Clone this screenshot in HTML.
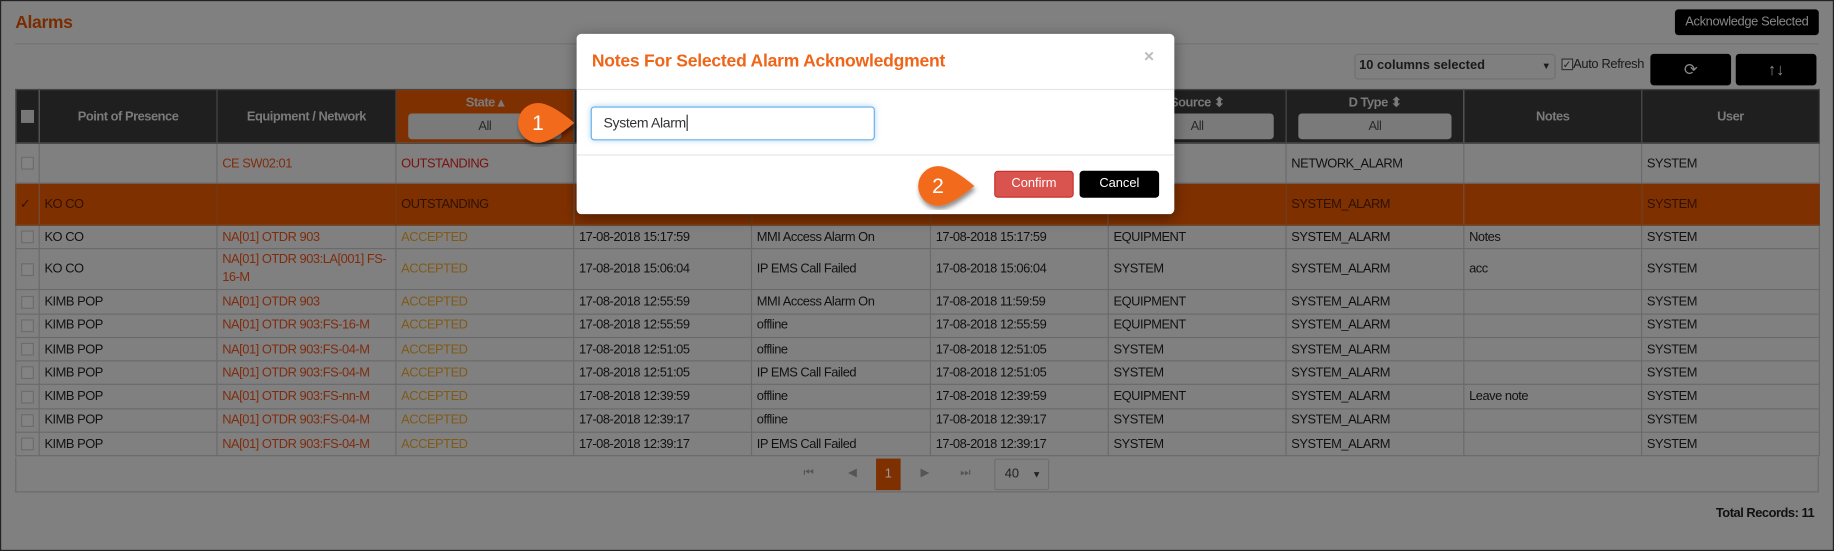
<!DOCTYPE html>
<html><head><meta charset="utf-8"><style>
*{box-sizing:border-box;margin:0;padding:0}
html,body{width:1834px;height:551px;overflow:hidden;background:#7f7f7f}
#w{position:absolute;left:0;top:0;width:1568px;height:471px;transform:scale(1.16964,1.16985);transform-origin:0 0;font-family:"Liberation Sans",sans-serif;font-size:11px;color:#111;background:#808080;border:1px solid #222}
.a{position:absolute}
table{position:absolute;left:12px;top:75px;border-collapse:collapse;width:1542px;table-layout:fixed}
td,th{border:1px solid #6a6a6a;padding:0 4px;white-space:nowrap;overflow:hidden;text-align:left;font-weight:normal;letter-spacing:-.4px}
th{background:#1f1f1f;color:#7a7a7a;font-weight:bold;text-align:center;height:46px;border-color:#444}
th.st{background:#7f3000}
.flt{display:block;margin:3px auto 0;width:92%;height:22px;border-radius:3px;background:#7a7a7a;color:#2a2a2a;font-weight:normal;line-height:22px}
td{height:20.3px}
.cb{width:11px;height:11px;border:1px solid #6c6c6c;background:#838383;display:inline-block;vertical-align:middle}
.lk{color:#7f2c0e}.ac{color:#7f5a18}.os{color:#7a1010}
tr.sel td{background:#7f3000;color:#2d1206;border-color:#6e3a18}
.btn{position:absolute;background:#000;border-radius:3px;color:#888;text-align:center}
</style></head><body><div id="w">
<div class="a" style="left:12px;top:10px;font-size:15px;font-weight:bold;color:#7a2c00;letter-spacing:-.3px">Alarms</div>
<div class="a" style="left:12px;top:36px;width:1542px;border-top:1px solid #737373"></div>
<div class="btn" style="left:1431px;top:7px;width:123px;height:22px;line-height:22px;font-size:11px;color:#888;letter-spacing:-.3px">Acknowledge Selected</div>
<div class="a" style="left:1157px;top:45px;width:172px;height:22px;border:1px solid #707070;border-radius:3px;background:#7f7f7f;color:#1a1a1a;font-weight:bold;padding:3px 3px;font-size:11px">10 columns selected<span style="float:right;font-size:8px;margin-top:2px">▼</span></div>
<div class="a" style="left:1334px;top:48px;font-size:11px;color:#1a1a1a;letter-spacing:-.3px"><span class="cb" style="width:10px;height:10px;font-size:9px;line-height:9px;background:#888;border-color:#333">✓</span>Auto Refresh</div>
<div class="btn" style="left:1410px;top:45px;width:69px;height:27px;line-height:27px;font-size:14px">⟳</div>
<div class="btn" style="left:1483px;top:45px;width:69px;height:27px;line-height:27px;font-size:14px">↑↓</div>
<table>
<colgroup><col style="width:20px"><col style="width:152px"><col style="width:153px"><col style="width:152px"><col style="width:152px"><col style="width:153px"><col style="width:152px"><col style="width:152px"><col style="width:152px"><col style="width:152px"><col style="width:152px"></colgroup>
<tr><th style="padding:0"><span class="cb" style="background:#777;border-color:#777"></span></th><th>Point of Presence</th><th>Equipment / Network</th><th class="st">State ▴<span class="flt">All</span></th><th>Raised Time<span class="flt">All</span></th><th>Description<span class="flt">All</span></th><th>Cleared<span class="flt">All</span></th><th>Source ⬍<span class="flt">All</span></th><th>D Type ⬍<span class="flt">All</span></th><th>Notes</th><th>User</th></tr>
<tr style="height:34px"><td><span class="cb"></span></td><td></td><td class="lk">CE SW02:01</td><td class="os">OUTSTANDING</td><td></td><td></td><td></td><td></td><td>NETWORK_ALARM</td><td></td><td>SYSTEM</td></tr>
<tr class="sel" style="height:36px"><td style="padding:0 3px">✓</td><td>KO CO</td><td></td><td>OUTSTANDING</td><td></td><td></td><td></td><td></td><td>SYSTEM_ALARM</td><td></td><td>SYSTEM</td></tr>
<tr><td><span class="cb"></span></td><td>KO CO</td><td class="lk">NA[01] OTDR 903</td><td class="ac">ACCEPTED</td><td>17-08-2018 15:17:59</td><td>MMI Access Alarm On</td><td>17-08-2018 15:17:59</td><td>EQUIPMENT</td><td>SYSTEM_ALARM</td><td>Notes</td><td>SYSTEM</td></tr>
<tr style="height:35px"><td><span class="cb"></span></td><td>KO CO</td><td class="lk" style="white-space:normal;line-height:15px">NA[01] OTDR 903:LA[001] FS-16-M</td><td class="ac">ACCEPTED</td><td>17-08-2018 15:06:04</td><td>IP EMS Call Failed</td><td>17-08-2018 15:06:04</td><td>SYSTEM</td><td>SYSTEM_ALARM</td><td>acc</td><td>SYSTEM</td></tr>
<tr><td><span class="cb"></span></td><td>KIMB POP</td><td class="lk">NA[01] OTDR 903</td><td class="ac">ACCEPTED</td><td>17-08-2018 12:55:59</td><td>MMI Access Alarm On</td><td>17-08-2018 11:59:59</td><td>EQUIPMENT</td><td>SYSTEM_ALARM</td><td></td><td>SYSTEM</td></tr>
<tr><td><span class="cb"></span></td><td>KIMB POP</td><td class="lk">NA[01] OTDR 903:FS-16-M</td><td class="ac">ACCEPTED</td><td>17-08-2018 12:55:59</td><td>offline</td><td>17-08-2018 12:55:59</td><td>EQUIPMENT</td><td>SYSTEM_ALARM</td><td></td><td>SYSTEM</td></tr>
<tr><td><span class="cb"></span></td><td>KIMB POP</td><td class="lk">NA[01] OTDR 903:FS-04-M</td><td class="ac">ACCEPTED</td><td>17-08-2018 12:51:05</td><td>offline</td><td>17-08-2018 12:51:05</td><td>SYSTEM</td><td>SYSTEM_ALARM</td><td></td><td>SYSTEM</td></tr>
<tr><td><span class="cb"></span></td><td>KIMB POP</td><td class="lk">NA[01] OTDR 903:FS-04-M</td><td class="ac">ACCEPTED</td><td>17-08-2018 12:51:05</td><td>IP EMS Call Failed</td><td>17-08-2018 12:51:05</td><td>SYSTEM</td><td>SYSTEM_ALARM</td><td></td><td>SYSTEM</td></tr>
<tr><td><span class="cb"></span></td><td>KIMB POP</td><td class="lk">NA[01] OTDR 903:FS-nn-M</td><td class="ac">ACCEPTED</td><td>17-08-2018 12:39:59</td><td>offline</td><td>17-08-2018 12:39:59</td><td>EQUIPMENT</td><td>SYSTEM_ALARM</td><td>Leave note</td><td>SYSTEM</td></tr>
<tr><td><span class="cb"></span></td><td>KIMB POP</td><td class="lk">NA[01] OTDR 903:FS-04-M</td><td class="ac">ACCEPTED</td><td>17-08-2018 12:39:17</td><td>offline</td><td>17-08-2018 12:39:17</td><td>SYSTEM</td><td>SYSTEM_ALARM</td><td></td><td>SYSTEM</td></tr>
<tr><td><span class="cb"></span></td><td>KIMB POP</td><td class="lk">NA[01] OTDR 903:FS-04-M</td><td class="ac">ACCEPTED</td><td>17-08-2018 12:39:17</td><td>IP EMS Call Failed</td><td>17-08-2018 12:39:17</td><td>SYSTEM</td><td>SYSTEM_ALARM</td><td></td><td>SYSTEM</td></tr>
</table>
<div class="a" style="left:12px;top:390px;width:1542px;height:30px;border:1px solid #6a6a6a;border-top:none"></div>
<div class="a" style="left:686px;top:398px;color:#555;font-size:10px">⏮</div>
<div class="a" style="left:724px;top:398px;color:#555;font-size:10px">◀</div>
<div class="a" style="left:748px;top:391px;width:21px;height:27px;background:#7f3000;color:#999;text-align:center;line-height:27px">1</div>
<div class="a" style="left:786px;top:398px;color:#555;font-size:10px">▶</div>
<div class="a" style="left:820px;top:398px;color:#555;font-size:10px">⏭</div>
<div class="a" style="left:849px;top:391px;width:47px;height:27px;border:1px solid #6e6e6e;border-radius:2px;line-height:25px;padding-left:8px;color:#222">40 <span style="font-size:8px;margin-left:8px">▼</span></div>
<div class="a" style="left:1466px;top:432px;font-weight:bold;color:#111;letter-spacing:-.4px">Total Records: 11</div>

<div class="a" style="left:492px;top:28px;width:511px;height:154px;background:#fff;border-radius:4px;box-shadow:0 3px 12px rgba(0,0,0,.4)">
<div class="a" style="left:13px;top:15px;font-size:15px;font-weight:bold;color:#f06418;letter-spacing:-.2px">Notes For Selected Alarm Acknowledgment</div>
<div class="a" style="left:485px;top:11px;font-size:15px;color:#bbb;font-weight:bold">×</div>
<div class="a" style="left:0;top:47px;width:511px;border-top:1px solid #e5e5e5"></div>
<div class="a" style="left:12px;top:62px;width:243px;height:29px;border:1px solid #66afe9;border-radius:3px;box-shadow:0 0 5px rgba(102,175,233,.5);padding:6px 10px;font-size:12px;color:#333;letter-spacing:-.3px">System Alarm<span style="border-left:1px solid #333;margin-left:1px"></span></div>
<div class="a" style="left:0;top:103px;width:511px;border-top:1px solid #e5e5e5"></div>
<div class="a" style="left:357px;top:117px;width:68px;height:23px;background:#d9534f;border:1px solid #c9302c;border-radius:3px;color:#fff;text-align:center;line-height:21px">Confirm</div>
<div class="a" style="left:430px;top:117px;width:68px;height:23px;background:#000;border-radius:3px;color:#fff;text-align:center;line-height:23px">Cancel</div>
</div>

<svg class="a" style="left:440px;top:84px" width="56" height="42"><defs><filter id="s"><feDropShadow dx="1" dy="3" stdDeviation="2" flood-opacity=".45"/></filter></defs><path d="M19 3 A17 17 0 1 0 19 37 Q30 37 50 20 Q30 3 19 3Z" fill="#f26a1b" filter="url(#s)"/><text x="19" y="26" font-family="Liberation Sans" font-size="18" fill="#fff" text-anchor="middle">1</text></svg>
<svg class="a" style="left:782px;top:138px" width="56" height="42"><path d="M19 3 A17 17 0 1 0 19 37 Q30 37 50 20 Q30 3 19 3Z" fill="#f26a1b" filter="url(#s)"/><text x="19" y="26" font-family="Liberation Sans" font-size="18" fill="#fff" text-anchor="middle">2</text></svg>
</div></body></html>
